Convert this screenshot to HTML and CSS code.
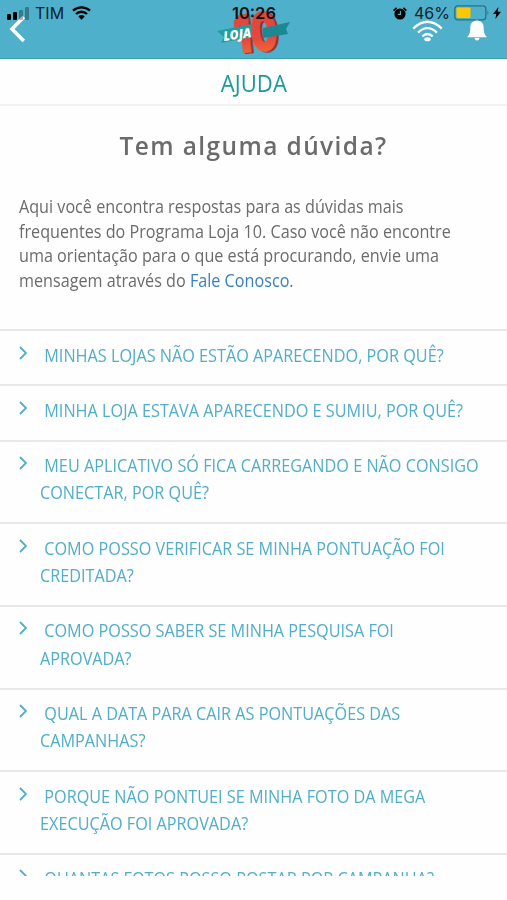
FILE: index.html
```
<!DOCTYPE html>
<html lang="pt-BR">
<head>
    <meta charset="UTF-8">
    <title>Loja 10 - Ajuda</title>
    <link rel="stylesheet" href="styles.css">
</head>
<body>
    <header class="topbar">
        <div class="status">
            <div class="status-left">
                <svg class="signal" width="24" height="13" viewBox="0 0 24 13">
                    <rect x="0" y="7" width="4" height="6" rx="1"/>
                    <rect x="6" y="5" width="4" height="8" rx="1"/>
                    <rect x="12" y="3" width="4" height="10" rx="1" opacity=".3"/>
                    <rect x="18" y="0" width="4" height="13" rx="1" opacity=".3"/>
                </svg>
                <span>TIM</span>
                <svg class="wifi" width="19" height="14" viewBox="0 0 19 14">
                    <path d="M1 4.7a12.5 12.5 0 0 1 17 0M4 8a8 8 0 0 1 11 0" fill="none" stroke="#000" stroke-width="2.4"/>
                    <path d="M9.5 13.8L6.3 10.5a4.7 4.7 0 0 1 6.4 0z"/>
                </svg>
            </div>
            <span class="clock">10:26</span>
            <div class="status-right">
                <svg width="14" height="13" viewBox="0 0 14 13">
                    <circle cx="7" cy="7" r="5.6"/>
                    <path d="M.6 3.6L3.6.8M13.4 3.6L10.4.8" stroke="#000" stroke-width="1.6"/>
                    <path d="M7.4 4v3.4H4.8" fill="none" stroke="#4eb0ca" stroke-width="1.1"/>
                </svg>
                <span class="percent">46%</span>
                <svg width="37" height="16" viewBox="0 0 37 16">
                    <rect x=".8" y=".8" width="31" height="14" rx="3" fill="none" stroke="#2b7180" stroke-width="1.3"/>
                    <rect x="2.5" y="2.5" width="14" height="10.6" rx="1" fill="#fdc800"/>
                    <path d="M33.5 5.5q2 2.3 0 4.6z" fill="#2b7180"/>
                </svg>
                <svg class="bolt" width="8" height="12" viewBox="0 0 8 12"><path d="M5.5 0L0 7h3.3L2.4 12 8 4.8H4.6z"/></svg>
            </div>
        </div>

        <svg class="back" width="18" height="28" viewBox="0 0 18 28"><path d="M15.8 2L4 14l11.8 12" fill="none" stroke="#fff" stroke-width="3.6"/></svg>

        <svg class="logo" width="76" height="50" viewBox="0 0 76 50">
            <defs>
                <linearGradient id="red" x1="0" y1="0" x2="0" y2="1">
                    <stop offset="0" stop-color="#d8483c"/>
                    <stop offset=".6" stop-color="#e8473c"/>
                    <stop offset="1" stop-color="#f57a35"/>
                </linearGradient>
            </defs>
            <text class="logo-ten" x="20" y="46" textLength="43" lengthAdjust="spacingAndGlyphs" fill="url(#red)" stroke="url(#red)" transform="rotate(-6 20 46)">10</text>
            <path d="M47 21l27-6-4 7 2 5-25 4z" fill="#1c8891"/>
            <path d="M1 24l35-7v13L5 36l3-6z" fill="#229d9f"/>
            <text class="logo-loja" x="8" y="34" textLength="28" lengthAdjust="spacingAndGlyphs" transform="rotate(-8 8 34)">LOJA</text>
        </svg>

        <svg class="online" width="31" height="22" viewBox="0 0 31 22">
            <path d="M1.3 8.6Q15.5-5 29.7 8.6M6 12.6Q15.5 3.6 25 12.6M10.3 16.4Q15.5 11.6 20.7 16.4" fill="none" stroke="#fff" stroke-width="2.3"/>
            <ellipse cx="15.5" cy="19.2" rx="3.2" ry="2" fill="#fff"/>
        </svg>
        <svg class="bell" width="20" height="22" viewBox="0 0 20 22">
            <path d="M10 0q1.600 0 1.600 1.700c4 .9 5.100 3.800 5.100 7.300 0 4 .5 6.500 3.300 9.300H0C2.800 15.500 3.300 13 3.300 9c0-3.500 1.100-6.400 5.100-7.300Q8.400 0 10 0zM7.500 19h5q-.4 2.600-2.500 2.600T7.500 19z" fill="#fff"/>
        </svg>
    </header>

    <h1 class="page-title"><span>AJUDA</span></h1>

    <main class="content">
        <h2 class="question"><span>Tem alguma dúvida?</span></h2>
        <p class="intro">Aqui você encontra respostas para as dúvidas mais<br>
            frequentes do Programa Loja 10. Caso você não encontre<br>
            uma orientação para o que está procurando, envie uma<br>
            mensagem através do <a href="#">Fale Conosco.</a></p>

        <ul class="faq">
            <li><svg class="arrow" viewBox="0 0 8 14"><path d="M1 1l6 6-6 6"/></svg><p>MINHAS LOJAS NÃO ESTÃO APARECENDO, POR QUÊ?</p></li>
            <li><svg class="arrow" viewBox="0 0 8 14"><path d="M1 1l6 6-6 6"/></svg><p>MINHA LOJA ESTAVA APARECENDO E SUMIU, POR QUÊ?</p></li>
            <li><svg class="arrow" viewBox="0 0 8 14"><path d="M1 1l6 6-6 6"/></svg><p>MEU APLICATIVO SÓ FICA CARREGANDO E NÃO CONSIGO<br>CONECTAR, POR QUÊ?</p></li>
            <li><svg class="arrow" viewBox="0 0 8 14"><path d="M1 1l6 6-6 6"/></svg><p>COMO POSSO VERIFICAR SE MINHA PONTUAÇÃO FOI<br>CREDITADA?</p></li>
            <li><svg class="arrow" viewBox="0 0 8 14"><path d="M1 1l6 6-6 6"/></svg><p>COMO POSSO SABER SE MINHA PESQUISA FOI<br>APROVADA?</p></li>
            <li><svg class="arrow" viewBox="0 0 8 14"><path d="M1 1l6 6-6 6"/></svg><p>QUAL A DATA PARA CAIR AS PONTUAÇÕES DAS<br>CAMPANHAS?</p></li>
            <li><svg class="arrow" viewBox="0 0 8 14"><path d="M1 1l6 6-6 6"/></svg><p>PORQUE NÃO PONTUEI SE MINHA FOTO DA MEGA<br>EXECUÇÃO FOI APROVADA?</p></li>
            <li><svg class="arrow" viewBox="0 0 8 14"><path d="M1 1l6 6-6 6"/></svg><p>QUANTAS FOTOS POSSO POSTAR POR CAMPANHA?</p></li>
        </ul>
    </main>
</body>
</html>
```
FILE: styles.css
```
* {
    box-sizing: border-box;
}

body {
    margin: 0;
    height: 900px;
    overflow: hidden;
    background: #fefefe;
    color: #6b6b6b;
    font-family: 'Open Sans', 'Noto Sans', sans-serif;
}

h1, h2, p, ul {
    margin: 0;
    padding: 0;
    font-weight: normal;
}

.topbar {
    position: relative;
    height: 59px;
    background: #4eb0ca;
    border-bottom: 1px solid #3d9fb0;
}

/* phone status bar lies over the app header */
.status {
    position: absolute;
    z-index: 2;
    inset: 0 0 auto 0;
    height: 26px;
    display: flex;
    align-items: center;
    justify-content: space-between;
    padding: 0 6px 0 7px;
    color: #10232a;
    font-family: Inter, sans-serif;
    font-size: 16px;
}

.status-left,
.status-right {
    display: flex;
    align-items: center;
}

.signal {
    margin-right: 4px;
}

.wifi {
    margin-left: 8px;
}

.clock {
    position: absolute;
    left: 232px;
    font-size: 16.5px;
    font-weight: 600;
    color: #111;
}

.percent {
    margin: 0 4px 0 7px;
}

.bolt {
    margin-left: 2px;
}

.back {
    position: absolute;
    left: 8px;
    top: 15px;
}

.logo {
    position: absolute;
    left: 216px;
    top: 7px;
    overflow: visible;
}

.logo-ten {
    font: 900 51px Inter, sans-serif;
    stroke-width: 2px;
    filter: drop-shadow(2px 1px 0 #8f2d35);
}

.logo-loja {
    font: italic 800 13px 'Open Sans', sans-serif;
    fill: #fff;
}

.online {
    position: absolute;
    left: 412px;
    top: 20px;
}

.bell {
    position: absolute;
    left: 467px;
    top: 19px;
}

.page-title {
    height: 47px;
    border-bottom: 2px solid #f2f2f2;
    text-align: center;
    font-size: 24px;
    font-weight: 500;
    line-height: 48px;
    color: #1d9a98;
}

.page-title span {
    display: inline-block;
    transform: scaleX(.92);
}

.question {
    padding-top: 21px;
    text-align: center;
    font-size: 26px;
    font-weight: 600;
    line-height: 36px;
    letter-spacing: 1.5px;
}

.question span {
    display: inline-block;
    transform: scaleX(.94);
}

/* narrow lettering */
.intro {
    margin: 31px 0 37px 19px;
    width: 500px;
    font-size: 17.5px;
    font-weight: 500;
    line-height: 24.5px;
    transform: scaleX(.924);
    transform-origin: 0 0;
}

.intro a {
    color: #3a80c0;
    text-decoration: none;
}

.faq {
    list-style: none;
    height: 547px;
    overflow: hidden;
}

.faq li {
    display: flex;
    border-top: 2px solid #e8e8e8;
    padding: 10.5px 0 15.7px 19px;
    color: #50aec8;
}

.faq p {
    margin-left: 13px;
    flex: none;
    font-size: 19px;
    font-weight: 500;
    line-height: 27.2px;
    text-indent: 5px;
    white-space: nowrap;
    transform: scaleX(.854);
    transform-origin: 0 0;
}

.arrow {
    flex: none;
    width: 8px;
    height: 14px;
    margin-top: 4px;
    fill: none;
    stroke: #50aec8;
    stroke-width: 1.8;
}
```
